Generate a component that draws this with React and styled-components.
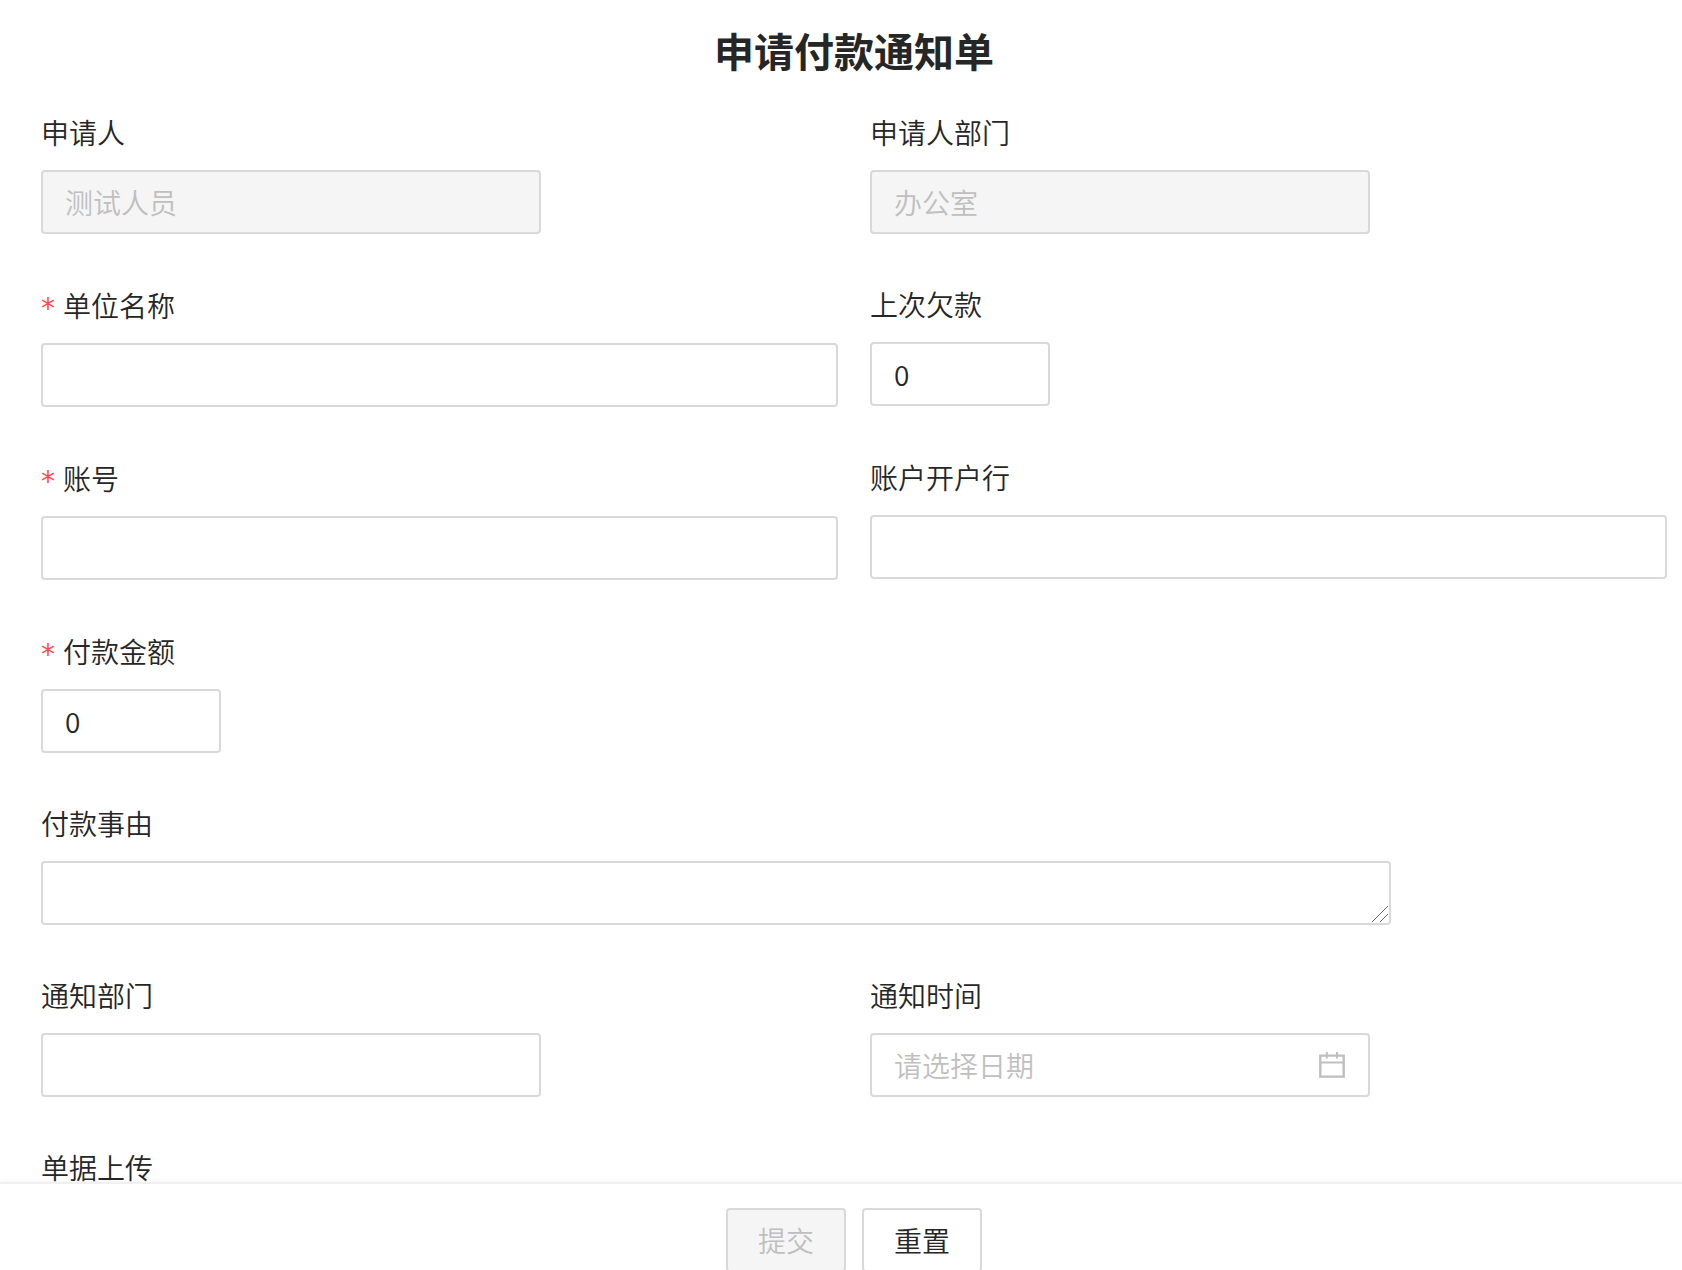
import React, { useState } from "react";
import styled, { createGlobalStyle } from "styled-components";

const GlobalStyle = createGlobalStyle`
  * {
    box-sizing: border-box;
  }

  body {
    margin: 0;
    background: #fff;
    color: #262626;
    font-family: "Noto Sans CJK SC", sans-serif;
    font-size: 28px;
    font-weight: 350;
    line-height: 44px;
  }

  input,
  textarea,
  button {
    font: inherit;
    color: inherit;
  }
`;

const Page = styled.form`
  display: flex;
  flex-direction: column;
  height: 100vh;
  overflow: hidden;
`;

const Content = styled.main`
  flex: 1;
  min-height: 0;
  overflow-y: auto;
  scrollbar-width: none;
  padding: 20px 15px 0 41px;
`;

const Title = styled.h1`
  margin: 0 0 30px;
  font-size: 40px;
  font-weight: 700;
  line-height: 60px;
  text-align: center;
`;

const Fields = styled.div`
  display: grid;
  grid-template-columns: 1fr 1fr;
  column-gap: 32px;
`;

const Field = styled.div`
  grid-column: ${(props) => (props.$full ? "1 / -1" : props.$first ? "1" : "auto")};
  padding-bottom: 48px;
`;

const Label = styled.label`
  display: flex;
  align-items: center;
  gap: 8px;
  height: ${(props) => (props.$required ? "45px" : "44px")};
  margin-bottom: 16px;
`;

const Star = styled.span`
  width: 14px;
  padding-top: 8px;
  color: #ff4d4f;
  font-family: "DejaVu Sans", sans-serif;
  font-weight: 400;
  line-height: 36px;
`;

const Input = styled.input`
  display: block;
  width: ${(props) => props.$width || "100%"};
  max-width: 100%;
  height: 64px;
  padding: 0 22px;
  border: 2px solid #d9d9d9;
  border-radius: 4px;
  background: #fff;
  outline: none;

  &:disabled {
    background: #f5f5f5;
    color: #bfbfbf;
  }
`;

const AreaBox = styled.div`
  position: relative;
  max-width: 1350px;
`;

const TextArea = styled.textarea`
  display: block;
  width: 100%;
  height: 64px;
  padding: 8px 22px;
  border: 2px solid #d9d9d9;
  border-radius: 4px;
  outline: none;
  resize: none;
`;

const Grip = styled.svg`
  position: absolute;
  right: 3px;
  bottom: 3px;
  pointer-events: none;
`;

const DateBox = styled.div`
  display: flex;
  align-items: center;
  width: 500px;
  max-width: 100%;
  height: 64px;
  padding: 0 23px 0 22px;
  border: 2px solid #d9d9d9;
  border-radius: 4px;
`;

const DateInput = styled.input`
  flex: 1;
  min-width: 0;
  padding: 0;
  border: 0;
  outline: none;
  background: transparent;

  &::placeholder {
    color: #bfbfbf;
    opacity: 1;
  }
`;

const Footer = styled.footer`
  display: flex;
  flex: none;
  justify-content: center;
  gap: 16px;
  height: 88px;
  padding: 24px 15px 0 41px;
  border-top: 2px solid #f0f0f0;
  background: #fff;
  box-shadow: 0 -2px 4px rgba(0, 0, 0, 0.03);
`;

const Button = styled.button`
  width: 120px;
  height: 64px;
  padding: 0;
  border: 2px solid #d9d9d9;
  border-radius: 4px;
  background: #fff;

  &:disabled {
    background: #f5f5f5;
    color: #bfbfbf;
  }
`;

const CalendarIcon = () => (
  <svg width="26" height="26" viewBox="0 0 26 26" fill="none" stroke="#bfbfbf" aria-hidden="true">
    <path strokeWidth="2.4" d="M1.3 3.6h23.4v21H1.3z" />
    <path strokeWidth="2" d="M1 10.4h24M7.8 0v6.6M18 0v6.6" />
  </svg>
);

const FormItem = ({ id, label, required, full, first, children }) => (
  <Field $full={full} $first={first}>
    <Label htmlFor={id} $required={required}>
      {required && <Star>*</Star>}
      {label}
    </Label>
    {children}
  </Field>
);

const App = () => {
  const [debt, setDebt] = useState("0");
  const [amount, setAmount] = useState("0");

  return (
    <>
      <GlobalStyle />
      <Page onSubmit={(e) => e.preventDefault()}>
        <Content>
          <Title>申请付款通知单</Title>
          <Fields>
            <FormItem id="applicant" label="申请人">
              <Input id="applicant" $width="500px" defaultValue="测试人员" disabled />
            </FormItem>
            <FormItem id="applicantDept" label="申请人部门">
              <Input id="applicantDept" $width="500px" defaultValue="办公室" disabled />
            </FormItem>
            <FormItem id="company" label="单位名称" required>
              <Input id="company" />
            </FormItem>
            <FormItem id="debt" label="上次欠款">
              <Input id="debt" $width="180px" value={debt} onChange={(e) => setDebt(e.target.value)} />
            </FormItem>
            <FormItem id="account" label="账号" required>
              <Input id="account" />
            </FormItem>
            <FormItem id="bank" label="账户开户行">
              <Input id="bank" />
            </FormItem>
            <FormItem id="amount" label="付款金额" required full>
              <Input id="amount" $width="180px" value={amount} onChange={(e) => setAmount(e.target.value)} />
            </FormItem>
            <FormItem id="reason" label="付款事由" full>
              <AreaBox>
                <TextArea id="reason" rows={1} />
                <Grip width="16" height="16" viewBox="0 0 16 16" stroke="#666" aria-hidden="true">
                  <path d="M0 16L16 0M8 16l8-8" />
                </Grip>
              </AreaBox>
            </FormItem>
            <FormItem id="noticeDept" label="通知部门" first>
              <Input id="noticeDept" $width="500px" />
            </FormItem>
            <FormItem id="noticeDate" label="通知时间">
              <DateBox>
                <DateInput id="noticeDate" placeholder="请选择日期" />
                <CalendarIcon />
              </DateBox>
            </FormItem>
            <FormItem id="receipt" label="单据上传" full>
              <input id="receipt" type="file" />
            </FormItem>
          </Fields>
        </Content>
        <Footer>
          <Button type="submit" disabled>
            提交
          </Button>
          <Button type="reset">重置</Button>
        </Footer>
      </Page>
    </>
  );
};

export default App;
